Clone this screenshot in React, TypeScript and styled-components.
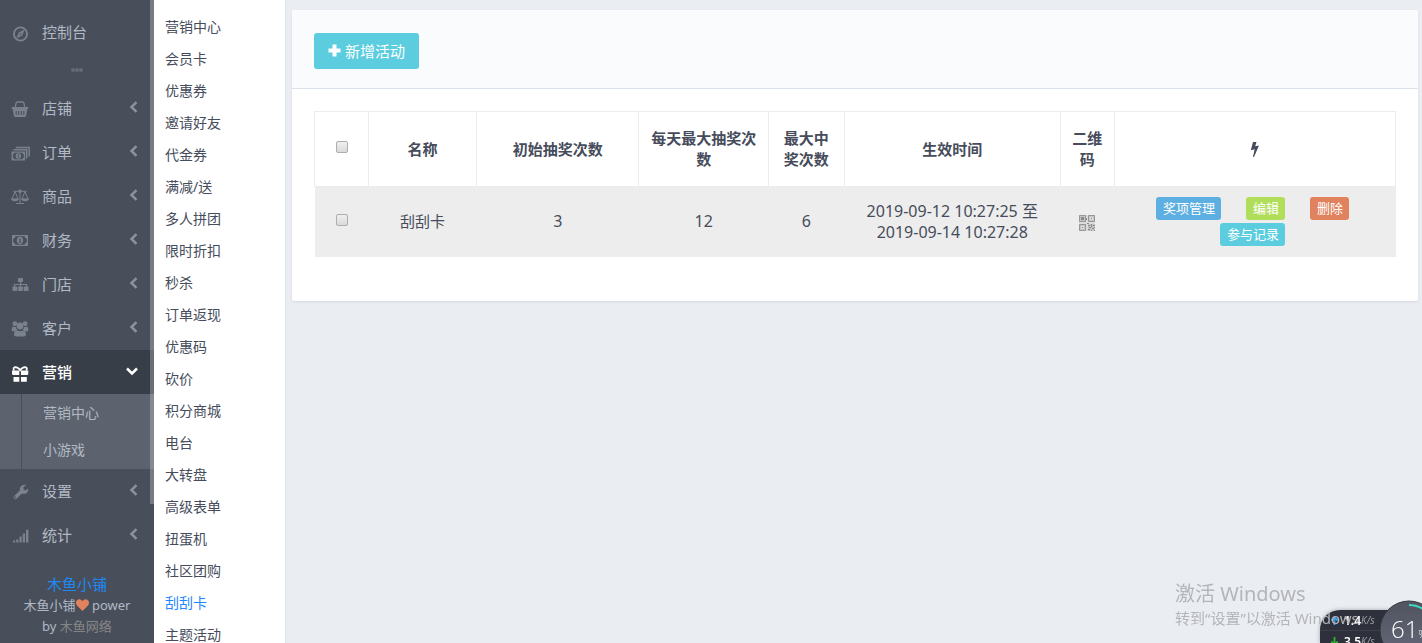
import React from 'react';
import styled, { createGlobalStyle } from 'styled-components';

const GlobalStyle = createGlobalStyle`
  * { box-sizing: border-box; }
  body {
    margin: 0;
    background: #eaedf2;
    color: #464c5b;
    font: 15px/21px "Noto Sans", "Noto Sans CJK SC", sans-serif;
  }
  a { color: inherit; text-decoration: none; }
  button { font-family: inherit; cursor: pointer; }
`;

const Page = styled.div`
  display: flex;
  height: 100vh;
  overflow: hidden;
`;

const Sidebar = styled.aside`
  position: relative;
  flex: 0 0 154px;
  padding-top: 10px;
  background: #484f5b;
  color: #b2b9c4;
  overflow: hidden;
`;

const ScrollThumb = styled.div`
  position: absolute;
  top: 0;
  right: 0;
  width: 4px;
  height: 504px;
  background: rgba(255, 255, 255, 0.25);
`;

const NavLink = styled.a<{ $active?: boolean }>`
  display: flex;
  align-items: center;
  height: 44px;
  padding: 0 16px 0 11px;
  background: ${(p) => (p.$active ? '#383e48' : 'transparent')};
  color: ${(p) => (p.$active ? '#fff' : 'inherit')};
  font-weight: ${(p) => (p.$active ? 500 : 400)};
`;

const NavIcon = styled.svg<{ $active?: boolean }>`
  width: 18px;
  height: 18px;
  margin: 2px 13px 0 0;
  overflow: visible;
  color: ${(p) => (p.$active ? '#fff' : '#7a828d')};
  fill: currentColor;
`;

const NavText = styled.span`
  flex: 1;
`;

const Chevron = styled.svg<{ $active?: boolean }>`
  width: 12px;
  height: 12px;
  margin-right: ${(p) => (p.$active ? '0' : '-2px')};
  margin-bottom: 2px;
  fill: none;
  stroke: ${(p) => (p.$active ? '#fff' : '#8b929d')};
  stroke-width: 2.5;
`;

const Divider = styled.div`
  display: flex;
  justify-content: center;
  align-items: center;
  height: 32px;
`;

const Dot = styled.i`
  width: 4px;
  height: 4px;
  border-radius: 2px;
  background: #646b76;
`;

const Children = styled.div`
  display: flex;
  flex-direction: column;
  padding-bottom: 1px;
  background: linear-gradient(#484f5b, #484f5b) 21px 0 / 1px 100% no-repeat #5c636e;
`;

const ChildLink = styled.a`
  padding-left: 43px;
  font-size: 14px;
  line-height: 37px;
`;

const Footer = styled.footer`
  padding: 16px 20px 0;
  font-size: 13px;
  text-align: center;
`;

const Brand = styled.a`
  display: block;
  color: #1e88f5;
  font-size: 15px;
  line-height: 22px;
`;

const Muted = styled.a`
  color: #868686;
`;

const Heart = styled.svg`
  width: 13px;
  height: 12px;
  vertical-align: -1px;
  fill: #e0825e;
`;

const SubNav = styled.nav`
  flex: 0 0 132px;
  display: flex;
  flex-direction: column;
  padding: 11px 0 0 11px;
  border-right: 1px solid #dee3ea;
  background: #fff;
  overflow: hidden;
`;

const SubLink = styled.a<{ $active?: boolean }>`
  flex: none;
  color: ${(p) => (p.$active ? '#1e88ff' : 'inherit')};
  font-size: 14px;
  line-height: 32px;
`;

const Main = styled.main`
  flex: 1;
  min-width: 0;
  padding: 10px 4px 10px 6px;
`;

const Card = styled.section`
  border-radius: 2px;
  background: #fff;
  box-shadow: 0 1px 2px #d5dae1;
`;

const CardHeader = styled.header`
  padding: 23px 22px 19px;
  border-bottom: 1px solid #dbe2e9;
  border-radius: 2px 2px 0 0;
  background: #fafbfd;
`;

const CardBody = styled.div`
  padding: 22px 22px 44px;
`;

const AddButton = styled.button`
  display: inline-flex;
  align-items: center;
  gap: 4px;
  height: 36px;
  padding: 0 14px 2px;
  border: 0;
  border-radius: 3px;
  background: #5bcddf;
  color: #fff;
  font-size: 15px;

  svg { width: 13px; height: 13px; fill: #fff; }
`;

const Table = styled.table`
  width: 100%;
  table-layout: fixed;
  border-collapse: collapse;
  text-align: center;
`;

const Th = styled.th<{ $w: number }>`
  width: ${(p) => p.$w}%;
  height: 75px;
  padding: 0 10px;
  border: 1px solid #e9edf2;
  font-weight: 700;
`;

const Td = styled.td<{ $numeric?: boolean }>`
  height: 70px;
  padding: 0 10px;
  background: #ededed;
  font-size: ${(p) => (p.$numeric ? 16 : 15)}px;
`;

const Check = styled.input.attrs({ type: 'checkbox' })`
  appearance: none;
  display: block;
  width: 12px;
  height: 12px;
  margin: 0 auto 4px;
  border: 1px solid #aeaeae;
  border-radius: 2px;
  background: linear-gradient(#efefef, #dadada);
`;

const Bolt = styled.svg`
  display: block;
  width: 9px;
  height: 15px;
  margin: 0 auto;
  fill: #464c5b;
`;

const QrButton = styled.button`
  display: block;
  margin: 0 auto;
  padding: 2px 0 0;
  border: 0;
  background: none;

  svg { display: block; width: 16px; height: 16px; }
`;

const Actions = styled.div`
  display: flex;
  flex-wrap: wrap;
  justify-content: center;
  gap: 3px 25px;
  padding: 0 28px 0 23px;
`;

const Tag = styled.button<{ $color: string }>`
  height: 23px;
  padding: 0 6px 0 7px;
  border: 0;
  border-radius: 3px;
  background: ${(p) => p.$color};
  color: #fff;
  font-size: 13px;
  line-height: 23px;
`;

const Watermark = styled.div`
  position: fixed;
  right: 60px;
  bottom: 13px;
  width: 187px;
  color: #b4b5b9;
  font-size: 15px;
  line-height: 24px;
  white-space: nowrap;
  pointer-events: none;

  strong { display: block; font-size: 20px; font-weight: 400; }
`;

const Monitor = styled.div`
  position: fixed;
  right: 0;
  bottom: 0;
  width: 102px;
  height: 43px;
`;

const Speeds = styled.div`
  height: 33px;
  overflow: hidden;
  margin-top: 10px;
  border-radius: 20px 0 0 0;
  background: #2e313b;
  box-shadow: 0 0 4px rgba(0, 0, 0, 0.3);
`;

const Speed = styled.div`
  display: flex;
  align-items: center;
  height: 21px;
  padding-left: 10px;
  border-bottom: 1px solid #3b3e49;
  color: #fff;
  font-size: 12px;
  font-weight: 600;

  svg { width: 9px; height: 9px; margin-right: 5px; fill: none; stroke-width: 2; }
  small { color: #9a9ca4; font-size: 10px; font-style: italic; font-weight: 400; }
`;

const Gauge = styled.div`
  position: absolute;
  top: 0;
  right: 0;
  width: 42px;
  height: 43px;
  overflow: hidden;

  svg { display: block; width: 42px; height: 43px; }
`;

const GaugeValue = styled.span`
  position: absolute;
  top: 16px;
  left: 11px;
  color: #fff;
  font: 300 24px/26px "Open Sans", sans-serif;
  white-space: nowrap;

  small { font-size: 10px; }
`;

const icons: Record<string, React.ReactNode> = {
  compass: (
    <>
      <circle cx="9.500" cy="10" r="6.600" fill="none" stroke="currentColor" strokeWidth="1.900" />
      <path fillRule="evenodd" d="M13.500 5.600 11.400 11.400 5.500 14.200 7.700 8.500ZM8.700 9.200v2l2.200-1.200Z" />
    </>
  ),
  basket: (
    <>
      <path d="M4.200 8 5 3.300Q5.300 2 6.500 2h5Q12.700 2 13 3.300L13.800 8" fill="none" stroke="currentColor" strokeWidth="1.300" />
      <path fillRule="evenodd" d="M1.400 7h15.200q.9 0 .9 1t-.9 1h-.3l-1.100 6.600q-.2 1.400-1.300 1.400H4.100q-1.100 0-1.300-1.400L1.700 9h-.3Q.5 9 .5 8t.9-1Zm3.300 4v4h1v-4Zm2.500 0v4h1v-4Zm2.600 0v4h1v-4Zm2.500 0v4h1v-4Z" />
    </>
  ),
  orders: (
    <>
      <path fillRule="evenodd" d="M.5 7.500h13.700v9H.5Zm2.800 1.300q0 1.400-1.400 1.400v3.600q1.400 0 1.400 1.400h8.100q0-1.400 1.400-1.400v-3.600q-1.400 0-1.400-1.400Z" />
      <path fillRule="evenodd" d="M7.300 9.300a2.700 2.700 0 1 1 0 5.400 2.700 2.700 0 0 1 0-5.400Zm-.5 1.200v3h1v-3Z" />
      <path d="M2.500 5.800h13.200v8.700M4.800 3.600h13.400v8.900" fill="none" stroke="currentColor" strokeWidth="1.500" />
    </>
  ),
  scale: (
    <>
      <path d="M2.500 3.300h13M9 1.800v13.700M5 15.500h8M4 3.500 1 11M4 3.500 7 11M14 3.500 11 11M14 3.500 17 11" fill="none" stroke="currentColor" />
      <path d="M0 10.500h8q-.3 2.700-4 2.700t-4-2.700ZM10 10.500h8q-.3 2.700-4 2.700t-4-2.700ZM9 1.500a1.700 1.700 0 1 1 0 3.400 1.700 1.700 0 0 1 0-3.400Z" />
    </>
  ),
  money: (
    <>
      <path fillRule="evenodd" d="M1 3h16v11H1Zm3.400 1.200q0 2.200-2.200 2.200v4.200q2.200 0 2.200 2.200h9.200q0-2.200 2.200-2.200V6.400q-2.200 0-2.200-2.200Z" />
      <path fillRule="evenodd" d="M9 4.800c4.300 0 4.300 7.400 0 7.400s-4.300-7.400 0-7.400Zm-1 1.900v1h.6v2H8v1h2.200v-1h-.6v-3Z" />
    </>
  ),
  sitemap: (
    <>
      <rect x="7" y="2" width="5" height="4" rx=".8" />
      <rect x="1.500" y="10.500" width="4.800" height="4.500" rx=".8" />
      <rect x="7.100" y="10.500" width="4.800" height="4.500" rx=".8" />
      <rect x="12.700" y="10.500" width="4.800" height="4.500" rx=".8" />
      <path d="M9.500 5v6M3.500 11V8.500h12V11" fill="none" stroke="currentColor" strokeWidth="1.200" />
    </>
  ),
  users: (
    <>
      <circle cx="3.900" cy="3.700" r="2.400" />
      <circle cx="14.100" cy="3.700" r="2.400" />
      <circle cx="9" cy="6" r="3.400" />
      <path d="M.8 10.800V8.700Q1 6.600 2.300 6.600q1.200.7 2.700.3.200 2 1.300 3-1.500.1-2.400 1.400H1.500Q.8 11.300.8 10.800ZM17.200 10.800V8.700Q17 6.600 15.700 6.600q-1.200.7-2.700.3-.2 2-1.300 3 1.500.1 2.400 1.400h2.400q.7 0 .7-.5ZM5 10Q3 11 3 14.500 3 16.500 5.200 16.500h7.600q2.200 0 2.200-2Q15 11 13 10.200q-4 2-8-.2Z" />
    </>
  ),
  gift: (
    <>
      <path d="M1 6.500h7.300v4.500H2.500Q1 11 1 9.700ZM10 6.500h7.300v3.200q0 1.300-1.500 1.300H10ZM2.500 13h5.800v4.800H2.500ZM10 13h5.800v4.800H10Z" />
      <path d="M3.200 6.500Q1.500 3.700 4 3.100 7.200 3 9.200 6.200 11.200 3 14.400 3.100 16.900 3.700 15.200 6.500" fill="none" stroke="currentColor" strokeWidth="1.700" />
    </>
  ),
  wrench: (
    <path fillRule="evenodd" d="m3.200 12.900 5.800-5.600Q8.200 3.800 11.300 2.200 13.400 1.300 15.300 2L12.500 4.100v2.300l2.100 1.200L17.200 5.600q.4 3.500-2.300 4.900-1.900.9-4 .1L5.600 15.700q-1.300 1.100-2.500-.1-1.200-1.300.1-2.700Zm1 .7a.8.8 0 1 0 .1 1.600.8.8 0 0 0-.1-1.600Z" />
  ),
  signal: (
    <path d="M2 13.500h2.200v2H2ZM5.200 12.500h2.200v3H5.200ZM8.500 9.500h2.200v6H8.500ZM11.800 6.500H14v9h-2.200ZM15 2.700h2.400v12.800H15Z" />
  ),
};

interface Item {
  icon: string;
  label: string;
  active?: boolean;
  children?: string[];
}

const items: Item[] = [
  { icon: 'basket', label: '店铺' },
  { icon: 'orders', label: '订单' },
  { icon: 'scale', label: '商品' },
  { icon: 'money', label: '财务' },
  { icon: 'sitemap', label: '门店' },
  { icon: 'users', label: '客户' },
  { icon: 'gift', label: '营销', active: true, children: ['营销中心', '小游戏'] },
  { icon: 'wrench', label: '设置' },
  { icon: 'signal', label: '统计' },
];

const subItems = [
  '营销中心', '会员卡', '优惠券', '邀请好友', '代金券', '满减/送', '多人拼团', '限时折扣', '秒杀', '订单返现',
  '优惠码', '砍价', '积分商城', '电台', '大转盘', '高级表单', '扭蛋机', '社区团购', '刮刮卡', '主题活动',
];

const NavRow = ({ icon, label, active }: Item) => (
  <NavLink href="#" $active={active}>
    <NavIcon viewBox="0 0 18 18" $active={active}>{icons[icon]}</NavIcon>
    <NavText>{label}</NavText>
    {icon !== 'compass' && (
      <Chevron viewBox="0 0 12 12" $active={active}>
        <path d={active ? 'M1 3.500 6 8.500 11 3.500' : 'M8.500 1.200 3.500 6 8.500 10.800'} />
      </Chevron>
    )}
  </NavLink>
);

const QrCode = () => (
  <svg viewBox="0 0 16 16">
    <path fill="#c4c4c4" d="M0 0h16v16H0Z" />
    <path fill="none" stroke="#979797" d="M.5.5h6v6h-6ZM9.500.5h6v6h-6ZM.5 9.500h6v6h-6Z" />
    <path fill="#dcdcdc" d="M7 0h2v16H7ZM0 7h16v2H0ZM11 2h3v3h-3ZM2 11h3v3H2Z" />
    <path fill="#8a8a8a" d="M2 2h3v3H2ZM12 3h1v1h-1ZM3 12h1v1H3ZM7 3h1v2H7ZM8 8h2v1H8ZM9 10h2v1H9ZM12 9h1v3h-1ZM14 10h2v1h-2ZM10 12h2v1h-2ZM13 13h2v1h-2ZM9 14h2v1H9ZM12 15h1v1h-1ZM15 12h1v1h-1ZM15 15h1v1h-1Z" />
  </svg>
);

export default function App() {
  return (
    <>
      <GlobalStyle />
      <Page>
        <Sidebar>
          <nav>
            <NavRow icon="compass" label="控制台" />
            <Divider><Dot /><Dot /><Dot /></Divider>
            {items.map((item) => (
              <React.Fragment key={item.label}>
                <NavRow {...item} />
                {item.children && (
                  <Children>
                    {item.children.map((child) => <ChildLink href="#" key={child}>{child}</ChildLink>)}
                  </Children>
                )}
              </React.Fragment>
            ))}
          </nav>
          <Footer>
            <Brand href="#">木鱼小铺</Brand>
            木鱼小铺
            <Heart viewBox="0 0 14 13"><path d="M7 13 1 7Q-1 4 .8 1.500 3.800-1.200 7 2.200 10.200-1.200 13.200 1.500 15 4 13 7Z" /></Heart>
            {' power by '}
            <Muted href="#">木鱼网络</Muted>
          </Footer>
          <ScrollThumb />
        </Sidebar>

        <SubNav>
          {subItems.map((label) => (
            <SubLink href="#" key={label} $active={label === '刮刮卡'}>{label}</SubLink>
          ))}
        </SubNav>

        <Main>
          <Card>
            <CardHeader>
              <AddButton>
                <svg viewBox="0 0 13 13"><path d="M4.500.500h4v4h4v4h-4v4h-4v-4h-4v-4h4Z" /></svg>
                新增活动
              </AddButton>
            </CardHeader>
            <CardBody>
              <Table>
                <thead>
                  <tr>
                    <Th $w={5}><Check aria-label="全选" /></Th>
                    <Th $w={10}>名称</Th>
                    <Th $w={15}>初始抽奖次数</Th>
                    <Th $w={12}>每天最大抽奖次数</Th>
                    <Th $w={7}>最大中奖次数</Th>
                    <Th $w={20}>生效时间</Th>
                    <Th $w={5}>二维码</Th>
                    <Th $w={26} aria-label="操作">
                      <Bolt viewBox="0 0 9 15"><path d="M3 0h3.500L5.200 4.300 9 3.400 4 15H3L4.600 7.300.8 8.200Z" /></Bolt>
                    </Th>
                  </tr>
                </thead>
                <tbody>
                  <tr>
                    <Td><Check aria-label="刮刮卡" /></Td>
                    <Td>刮刮卡</Td>
                    <Td $numeric>3</Td>
                    <Td $numeric>12</Td>
                    <Td $numeric>6</Td>
                    <Td $numeric>2019-09-12 10:27:25 至 2019-09-14 10:27:28</Td>
                    <Td><QrButton aria-label="二维码"><QrCode /></QrButton></Td>
                    <Td>
                      <Actions>
                        <Tag $color="#5dafe1">奖项管理</Tag>
                        <Tag $color="#b0de5b">编辑</Tag>
                        <Tag $color="#e1825e">删除</Tag>
                        <Tag $color="#5bcddf">参与记录</Tag>
                      </Actions>
                    </Td>
                  </tr>
                </tbody>
              </Table>
            </CardBody>
          </Card>
        </Main>
      </Page>

      <Monitor>
        <Speeds>
          <Speed>
            <svg viewBox="0 0 10 10" stroke="#3aa5ee"><path d="M5 10V2M1.500 5 5 1.500 8.500 5" /></svg>
            1.4<small>K/s</small>
          </Speed>
          <Speed>
            <svg viewBox="0 0 10 10" stroke="#2fb52f"><path d="M5 0v8M1.500 5 5 8.500 8.500 5" /></svg>
            3.5<small>K/s</small>
          </Speed>
        </Speeds>
        <Gauge>
          <svg viewBox="0 0 42 43">
            <defs>
              <linearGradient id="dial" x1="0" y1="0" x2="0" y2="1">
                <stop offset="0" stopColor="#51545f" />
                <stop offset="1" stopColor="#64687a" />
              </linearGradient>
            </defs>
            <circle cx="29" cy="30" r="29" fill="url(#dial)" stroke="#33353f" />
            <path d="M29 5A25 25 0 0 1 43 9" fill="none" stroke="#3fd8c4" strokeWidth="2" />
          </svg>
          <GaugeValue>61<small>%</small></GaugeValue>
        </Gauge>
      </Monitor>
      <Watermark>
        <strong>激活 Windows</strong>
        转到“设置”以激活 Windows
      </Watermark>
    </>
  );
}
